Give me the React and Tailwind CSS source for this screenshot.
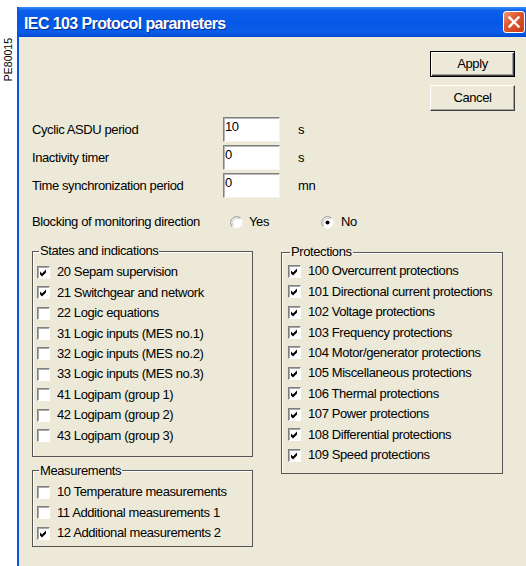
import React from 'react';

const states = [
  { label: '20 Sepam supervision', on: true },
  { label: '21 Switchgear and network', on: true },
  { label: '22 Logic equations', on: false },
  { label: '31 Logic inputs (MES no.1)', on: false },
  { label: '32 Logic inputs (MES no.2)', on: false },
  { label: '33 Logic inputs (MES no.3)', on: false },
  { label: '41 Logipam (group 1)', on: false },
  { label: '42 Logipam (group 2)', on: false },
  { label: '43 Logipam (group 3)', on: false },
];

const measurements = [
  { label: '10 Temperature measurements', on: false },
  { label: '11 Additional measurements 1', on: false },
  { label: '12 Additional measurements 2', on: true },
];

const protections = [
  { label: '100 Overcurrent protections', on: true },
  { label: '101 Directional current protections', on: true },
  { label: '102 Voltage protections', on: true },
  { label: '103 Frequency protections', on: true },
  { label: '104 Motor/generator protections', on: true },
  { label: '105 Miscellaneous protections', on: true },
  { label: '106 Thermal protections', on: true },
  { label: '107 Power protections', on: true },
  { label: '108 Differential protections', on: true },
  { label: '109 Speed protections', on: true },
];

// classic sunken 13px checkbox
const CheckBox = ({ on }) => (
  <span className="flex h-[13px] w-[13px] shrink-0 items-center justify-center border border-t-[#808080] border-l-[#808080] border-b-white border-r-white bg-white shadow-[inset_1px_1px_0_#a8a8a8]">
    {on && (
      <svg width="11" height="11" viewBox="0 0 11 11">
        <path d="M2 4.5 L4 6.5 L8 2.5 L8 5.5 L4 9.5 L2 7.5 Z" fill="#000" />
      </svg>
    )}
  </span>
);

const Radio = ({ on }) => (
  <svg width="13" height="13" viewBox="0 0 13 13" className="shrink-0">
    <circle cx="6.5" cy="6.5" r="6" fill="#fff" />
    <path d="M2.26 10.74 A6 6 0 0 1 10.74 2.26" stroke="#909090" strokeWidth="1" fill="none" />
    <path d="M3.2 9.8 A4.7 4.7 0 0 1 9.8 3.2" stroke="#c8c8c8" strokeWidth="1" fill="none" />
    <path d="M10.74 2.26 A6 6 0 0 1 2.26 10.74" stroke="#f4f3ee" strokeWidth="1" fill="none" />
    {on && <circle cx="6.5" cy="6.5" r="2" fill="#000" />}
  </svg>
);

const Field = ({ value }) => (
  <div className="flex h-[25px] w-[57px] shrink-0 items-start border border-t-[#808080] border-l-[#808080] border-b-[#f4f3ee] border-r-[#f4f3ee] bg-white pl-[1px] pt-[1px] leading-[15px] shadow-[inset_1px_1px_0_#b8b8b8]">
    {value}
  </div>
);

const Row = ({ label, on }) => (
  <div className="flex h-[20.44px] items-center gap-[7px]">
    <CheckBox on={on} />
    <span className="min-w-0 flex-1 overflow-hidden whitespace-nowrap leading-[16px]">{label}</span>
  </div>
);

export default function App() {
  return (
    <div className="flex h-[566px] w-[526px] overflow-hidden bg-white font-['Liberation_Sans',Arial,sans-serif] text-[13px] tracking-[-0.4px] text-black">
      {/* side reference code */}
      <div className="w-[17px] shrink-0 pl-[3px] pt-[38px]">
        <span className="inline-block rotate-180 text-[10.5px] leading-[11px] tracking-normal [writing-mode:vertical-rl]">
          PE80015
        </span>
      </div>

      <div className="mt-[7px] flex h-[559px] flex-1 flex-col border-l-2 border-[#0b55e0]">
        {/* title bar */}
        <div className="flex h-[30px] shrink-0 items-center justify-between bg-[linear-gradient(to_bottom,#3c8ef3_0%,#0a5fea_12%,#0558e6_50%,#0a5de8_85%,#0048d0_100%)] pl-[5px] pr-[1px]">
          <span className="pt-[3px] text-[16px] font-bold leading-[20px] tracking-[-0.6px] text-white [text-shadow:1px_1px_0_#0a2a8a]">
            IEC 103 Protocol parameters
          </span>
          <button className="flex h-[22px] w-[22px] items-center justify-center rounded-[3px] border border-white bg-[linear-gradient(135deg,#f09a7a_0%,#e0582e_40%,#c83c16_100%)]">
            <svg width="14" height="14" viewBox="0 0 14 14">
              <path d="M2.5 2.5 L11.5 11.5 M11.5 2.5 L2.5 11.5" stroke="#fff" strokeWidth="2.4" strokeLinecap="square" />
            </svg>
          </button>
        </div>

        {/* dialog body */}
        <div className="flex flex-1 flex-col bg-[#ECE9D8] pl-[13px]">
          <div className="flex flex-col items-end gap-[8px] pr-[11px] pt-[14px]">
            <button className="flex h-[26px] w-[85px] items-center justify-center border border-black bg-[#ECE9D8] tracking-[-0.4px] shadow-[inset_1px_1px_0_#fff,inset_-1px_-1px_0_#404040,inset_-2px_-2px_0_#a0a0a0]">
              Apply
            </button>
            <button className="flex h-[26px] w-[85px] items-center justify-center border border-t-white border-l-white border-b-[#404040] border-r-[#404040] bg-[#ECE9D8] tracking-[-0.4px] shadow-[inset_-1px_-1px_0_#a0a0a0]">
              Cancel
            </button>
          </div>

          <div className="mt-[6px] flex flex-col gap-[3px]">
            <div className="flex h-[25px] items-center">
              <span className="w-[191px]">Cyclic ASDU period</span>
              <Field value="10" />
              <span className="ml-[18px]">s</span>
            </div>
            <div className="flex h-[25px] items-center">
              <span className="w-[191px]">Inactivity timer</span>
              <Field value="0" />
              <span className="ml-[18px]">s</span>
            </div>
            <div className="flex h-[25px] items-center">
              <span className="w-[191px]">Time synchronization period</span>
              <Field value="0" />
              <span className="ml-[18px]">mn</span>
            </div>
          </div>

          <div className="mt-[14px] flex h-[20px] items-center">
            <span className="w-[198px] whitespace-nowrap">Blocking of monitoring direction</span>
            <label className="flex w-[91px] items-center gap-[6px]">
              <Radio on={false} />
              <span>Yes</span>
            </label>
            <label className="flex items-center gap-[7px]">
              <Radio on />
              <span>No</span>
            </label>
          </div>

          <div className="mt-[12px] flex items-start gap-[28px]">
            <div className="flex w-[221px] flex-col gap-[7px]">
              <fieldset className="min-w-0 border border-[#555] pb-[10px] pl-[4px] pr-[3px] pt-[4px] shadow-[inset_1px_1px_0_#fff]">
                <legend className="ml-[2px] px-[1px] leading-[14px]">States and indications</legend>
                {states.map((s) => (
                  <Row key={s.label} label={s.label} on={s.on} />
                ))}
              </fieldset>
              <fieldset className="min-w-0 border border-[#555] pb-[3px] pl-[4px] pr-[3px] pt-[4px] shadow-[inset_1px_1px_0_#fff]">
                <legend className="ml-[2px] px-[1px] leading-[14px]">Measurements</legend>
                {measurements.map((s) => (
                  <Row key={s.label} label={s.label} on={s.on} />
                ))}
              </fieldset>
            </div>

            <fieldset className="mt-[1px] w-[222px] min-w-0 border border-[#555] pb-[8px] pl-[6px] pr-[3px] pt-[2px] shadow-[inset_1px_1px_0_#fff]">
              <legend className="ml-[2px] px-[1px] leading-[14px]">Protections</legend>
              {protections.map((s) => (
                <Row key={s.label} label={s.label} on={s.on} />
              ))}
            </fieldset>
          </div>
        </div>
      </div>
    </div>
  );
}
